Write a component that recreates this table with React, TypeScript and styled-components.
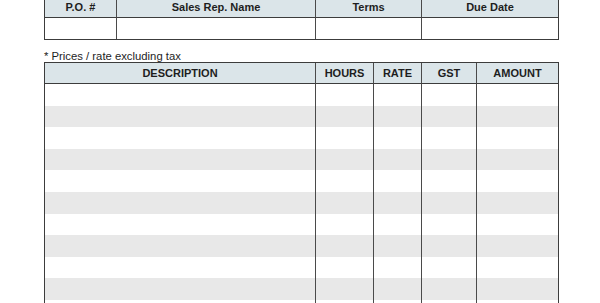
import React from "react";
import styled, { createGlobalStyle } from "styled-components";

const GlobalStyle = createGlobalStyle`
  html, body {
    margin: 0;
    padding: 0;
    background: #ffffff;
    font-family: "Liberation Sans", Arial, sans-serif;
    color: #1e1e1e;
    overflow: hidden;
  }
`;

const topCols = [72, 199, 106, 136];
const itemCols = [271, 58, 48, 55, 81];

const topHeads = ["P.O. #", "Sales Rep. Name", "Terms", "Due Date"];
const itemHeads = ["DESCRIPTION", "HOURS", "RATE", "GST", "AMOUNT"];

const ROW_COUNT = 12;

const App: React.FC = () => {
  const topTemplate = topCols.map((w) => `${w}px`).join(" ");
  const itemTemplate = itemCols.map((w) => `${w}px`).join(" ");

  return (
    <Page>
      <GlobalStyle />
      <Sheet>
        <Table>
          <Row $cols={topTemplate}>
            {topHeads.map((h, i) => (
              <HeadCell key={h} $last={i === topHeads.length - 1}>
                {h}
              </HeadCell>
            ))}
          </Row>
          <Row $cols={topTemplate}>
            {topHeads.map((h, i) => (
              <BodyCell key={h} $last={i === topHeads.length - 1} $height={21} />
            ))}
          </Row>
        </Table>

        <Caption>* Prices / rate excluding tax</Caption>

        <Table>
          <Row $cols={itemTemplate}>
            {itemHeads.map((h, i) => (
              <HeadCell key={h} $last={i === itemHeads.length - 1}>
                {h}
              </HeadCell>
            ))}
          </Row>
          {Array.from({ length: ROW_COUNT }).map((_, r) => (
            <Row key={r} $cols={itemTemplate} $striped={r % 2 === 1}>
              {itemHeads.map((h, i) => (
                <ItemCell key={h} $last={i === itemHeads.length - 1} />
              ))}
            </Row>
          ))}
        </Table>
      </Sheet>
    </Page>
  );
};

const Page = styled.div`
  width: 600px;
  height: 303px;
  overflow: hidden;
  position: relative;
`;

const Sheet = styled.div`
  display: flex;
  flex-direction: column;
  width: 515px;
  margin-left: 44px;
  margin-top: -4px;
`;

const Table = styled.div`
  display: flex;
  flex-direction: column;
  border: 1px solid #3c3c3c;
  background: #ffffff;
`;

const Row = styled.div<{ $cols: string; $striped?: boolean }>`
  display: grid;
  grid-template-columns: ${(p) => p.$cols};
  background: ${(p) => (p.$striped ? "#e8e8e8" : "#ffffff")};
`;

const HeadCell = styled.div<{ $last?: boolean }>`
  height: 20px;
  display: flex;
  align-items: center;
  justify-content: center;
  background: #dbe5e9;
  border-bottom: 1px solid #3c3c3c;
  border-right: ${(p) => (p.$last ? "none" : "1px solid #4a4a4a")};
  font-size: 11px;
  font-weight: bold;
  color: #1e1e1e;
  white-space: nowrap;
`;

const BodyCell = styled.div<{ $last?: boolean; $height: number }>`
  height: ${(p) => p.$height}px;
  border-right: ${(p) => (p.$last ? "none" : "1px solid #4a4a4a")};
`;

const ItemCell = styled.div<{ $last?: boolean }>`
  height: 21.6px;
  border-right: ${(p) => (p.$last ? "none" : "1px solid #4a4a4a")};
`;

const Caption = styled.div`
  height: 22px;
  display: flex;
  align-items: flex-end;
  font-size: 11.3px;
  line-height: 12px;
  color: #1e1e1e;
`;

export default App;
